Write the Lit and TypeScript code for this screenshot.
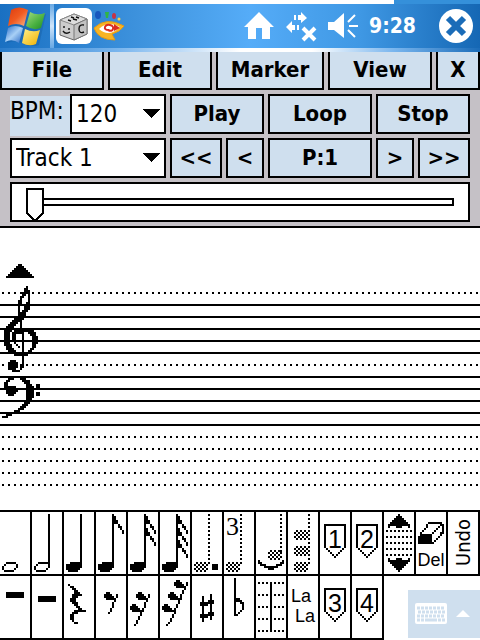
import { LitElement, html, css, svg } from "lit";
import { customElement, state } from "lit/decorators.js";

/* Bitmap art: rows are separated by spaces, spans in a row by commas, "_" is an empty row. */
function runs(top: number, rows: string): string {
  return rows
    .trim()
    .split(/\s+/)
    .map((row, i) =>
      row === "_"
        ? ""
        : row
            .split(",")
            .map((s) => {
              const [a, b = a] = s.split("-").map(Number);
              return `M${a} ${top + i}h${b - a + 1}v1h${a - b - 1}z`;
            })
            .join("")
    )
    .join("");
}

const range = (a: number, b: number, step: number) => {
  const out: number[] = [];
  for (let i = a; i <= b; i += step) out.push(i);
  return out;
};
const stem = (x: number, a = 1, b = 27) => `M${x} ${a}h1v${b - a + 1}h-1z`;
const dotStem = (x: number, a = 1, b = 25) => range(a, b, 2).map((y) => `M${x} ${y}h1v1h-1z`).join("");
const dotRow = (y: number, xs: number[]) => xs.map((x) => `M${x} ${y}h1v1h-1z`).join("");
const head = runs(25, "3-7 1-8 1-8 1-7 2-6");
const hollow = runs(25, "3-7 2,8 1,8 1,7 2-6");
const ghost = (x: number, y: number) =>
  runs(
    y,
    [0, 1, 2, 3, 4].map((r) => (r % 2 ? `${x},${x + 2},${x + 4},${x + 6}` : `${x + 1},${x + 3},${x + 5}`)).join(" ")
  );
const flag = (y: number) => runs(y, "8 8-9 8-9 8-10 9-10 11 11-12 12 13 13");
const restBlob = (x: number, y: number) => runs(y, `${x + 1}-${x + 2} ${x}-${x + 3} ${x}-${x + 4} ${x + 1}-${x + 5}`);
const shield = runs(6, "2-12 2,12 2,12 2,12 2,12 2,12 2,12 2,12 2,12 2,12 2,12 2,12 3,11 4,10 5,9 6,8 7");

interface Tool {
  name: string;
  art: string;
  text?: string;
  kind?: string;
}

const tools: Tool[] = [
  { name: "Whole note", art: hollow },
  { name: "Half note", art: hollow + stem(8) },
  { name: "Quarter note", art: head + stem(8) },
  { name: "Eighth note", art: head + stem(8) + flag(1) },
  { name: "Sixteenth note", art: head + stem(8) + flag(1) + flag(7) },
  { name: "Thirty-second note", art: head + stem(8) + flag(1) + flag(7) + flag(13) },
  { name: "Dotted", art: ghost(1, 25) + dotStem(8) + runs(26, "10-12 10-12 10-12") },
  { name: "Triplet", art: ghost(1, 25) + dotStem(8), text: "3", kind: "triplet" },
  { name: "Tie", art: ghost(6, 19) + dotStem(12, 1, 19) + runs(24, "1,13 1-2,12-13 2-4,10-12 4-10 6-8") },
  { name: "Chord", art: ghost(3, 9) + ghost(3, 17) + ghost(3, 25) + dotStem(10) },
  { name: "Marker 1", art: shield, text: "1", kind: "mark" },
  { name: "Marker 2", art: shield, text: "2", kind: "mark" },
  {
    name: "Transpose",
    art:
      runs(1, "7 6-8 5-9 4-10 3-11 2-4,5-9,10-12 2,6-8,12") +
      [9, 12, 15, 18, 21].map((y) => dotRow(y, range(1, 13, 2))).join("") +
      runs(23, "2,6-8,12 2-4,5-9,10-12 3-11 4-10 5-9 6-8 7"),
  },
  { name: "Delete", art: runs(5, "6-12 5,12-13 5,11,13 4,10,13 3,9,13 2,8,12-13 2-7,12 1-7,11 1-7,10 1-7,9 1-8"), text: "Del", kind: "del" },
  { name: "Undo", art: "", text: "Undo", kind: "undo" },
  { name: "Whole rest", art: runs(8, "3-11 3-11 3-11") },
  { name: "Half rest", art: runs(10, "3-11 3-11 3-11") },
  { name: "Quarter rest", art: runs(4, "2 3-4 4-5 5-6 5-7 4-8 4-6 3-5 3-5 4-6 5-6 6-7 7-8 5-10 4-6 3-4 3-4 3-4 4 5-6") },
  { name: "Eighth rest", art: restBlob(4, 8) + runs(9, "10 10 9 9 8 8 8 7 7 6") },
  { name: "Sixteenth rest", art: restBlob(4, 8) + restBlob(1, 14) + runs(9, "10 10 9 9 8 8 8 7 7 6 6 5 5 4 4 3") },
  {
    name: "Thirty-second rest",
    art: restBlob(7, 2) + restBlob(4, 8) + restBlob(1, 14) + runs(3, "13 13 12 12 11 11 10 10 10 9 9 8 8 7 7 7 6 6 5 5 4 3"),
  },
  { name: "Sharp", art: stem(5, 10, 22) + stem(9, 9, 21) + runs(12, "8-10 4-10 4-7 _ _ _ 8-10 4-10 4-7") },
  { name: "Flat", art: stem(5, 1, 19) + runs(11, "6-7 6-8 8-9 9 9 9 8 7 5-6") },
  { name: "Bar line", art: stem(7, 3, 27) + [3, 9, 15, 21, 27].map((y) => dotRow(y, [1, 3, 5, 9, 11, 13])).join("") },
  { name: "Lyrics", art: "", text: "La La", kind: "lyrics" },
  { name: "Marker 3", art: shield, text: "3", kind: "mark" },
  { name: "Marker 4", art: shield, text: "4", kind: "mark" },
];

const scrollUp = runs(0, "9-10 8-11 7-12 6-13 5-14 4-15 3-16");
const treble = runs(
  11,
  `13 12-13 12-14 11-12,14 11-12,14 10-11,14 10,14 9-10,14 9-10,13-14 9,13-14 9,12-14 9,12-14 9,11-13 9-12 9-12 8-11
  7-11 6-10 5-8,10 4-7,10 3-6,10 3-5,8-14 2-5,7-16 2-4,6-11,14-17 2-4,6-7,11,15-17 2-4,6-7,11,16-18 2-4,6-7,11,16-18
  2-4,6-7,11,16-18 2-4,7,11,16-18 2-5,8,11,16-17 3-5,9,11,16-17 3-6,11,15-16 4-7,11,14-15 5-14 7-13 11 11 5-7,11
  4-8,11 4-8,11 4-8,10-11 4-7,10 6-9`
);
const bass = runs(
  56,
  `6-10 4-6,10-12 3-4,11-14 2-3,12-14 2-3,13-15,18-19 2-7,13-16,18-19 2-8,13-16 3-8,13-16 3-7,13-16,18-19
  4-6,13-16,18-19 13-16 13-15 12-15 12-14 11-13 10-12 9-11 7-9 5-7 3-5 1-3`
);

const staffLines = "dsssssdsssssddddd".split("");

@customElement("app-root")
export class AppRoot extends LitElement {
  @state() private position = 0;

  static styles = css`
    :host {
      display: block;
      background: #fff;
      color: #000;
      font-family: "DejaVu Sans Condensed", "DejaVu Sans", sans-serif;
      --face: #cfdfee;
      --panel: #c5c1c6;
    }
    * {
      box-sizing: border-box;
    }
    button,
    select,
    input {
      font: inherit;
      color: inherit;
      margin: 0;
      padding: 0;
      border-radius: 0;
    }
    svg {
      display: block;
    }
    .edge {
      height: 4px;
      background: linear-gradient(90deg, #fff 82%, #3590da 82%);
    }
    .title {
      display: flex;
      align-items: center;
      height: 44px;
      padding: 0 6px 0 4px;
      color: #fff;
      background: linear-gradient(90deg, #1a70c2, #4196e0 32%, #55acf8 52%, #3f98e4 75%, #1567b4);
    }
    .title button {
      border: 0;
      background: none;
      flex: none;
    }
    .rule {
      width: 4px;
      height: 44px;
      margin: 0 2px;
      background: linear-gradient(#67a8e4, #cfe5fa, #67a8e4);
    }
    .spacer {
      flex: 1;
    }
    .status {
      display: flex;
      align-items: center;
      gap: 10px;
    }
    .clock {
      font-size: 21px;
      font-weight: bold;
      margin-right: 22px;
    }
    .shine {
      height: 4px;
      background: linear-gradient(90deg, #2a7ccb, #7ab6ee 25%, #fff 50%, #fff 65%, #7ab6ee 82%, #1b6cb9);
    }
    .menu {
      display: grid;
      grid-template-columns: 104fr 104fr 108fr 104fr 44fr;
      gap: 4px;
      background: var(--panel);
    }
    .btn {
      height: 40px;
      min-width: 0;
      border: 2px solid #000;
      background: var(--face);
      font-size: 22px;
      font-weight: bold;
      line-height: 36px;
      white-space: nowrap;
    }
    .menu .btn {
      height: 38px;
      border-top: 0;
    }
    .panel {
      display: grid;
      grid-template-columns: 156fr 52fr 38fr 104fr 38fr 52fr;
      gap: 4px;
      padding: 4px 10px;
      background: var(--panel);
      border-bottom: 2px solid #000;
    }
    .wide {
      grid-column: span 2;
    }
    .tempo {
      display: flex;
      height: 40px;
    }
    .tempo label {
      flex: 0 0 60px;
      height: 40px;
      margin-top: 2px;
      background: var(--face);
      font-size: 24px;
      line-height: 30px;
      white-space: nowrap;
    }
    .combo {
      flex: 1;
      min-width: 0;
      display: grid;
      align-items: center;
      justify-items: end;
    }
    .combo > * {
      grid-area: 1 / 1;
    }
    .combo svg {
      margin-right: 6px;
      pointer-events: none;
    }
    .combo select {
      appearance: none;
      width: 100%;
      height: 40px;
      padding: 0 4px;
      border: 2px solid #000;
      background: #fff;
      font-size: 24px;
    }
    .seek {
      grid-column: 1 / -1;
      height: 40px;
      padding: 0 14px;
      border: 2px solid #000;
      background: #fff;
    }
    .seek input {
      appearance: none;
      display: block;
      width: 100%;
      height: 36px;
      background: none;
    }
    .seek input::-webkit-slider-runnable-track {
      height: 8px;
      border: 2px solid #000;
      background: #fff;
    }
    .seek input::-webkit-slider-thumb {
      appearance: none;
      width: 18px;
      height: 34px;
      margin: -12px 0 0 -2px;
      background: url("data:image/svg+xml,%3Csvg xmlns='http://www.w3.org/2000/svg' width='18' height='34' shape-rendering='crispEdges'%3E%3Cpath d='M1 1H17V25L9 33L1 25Z' fill='white' stroke='black' stroke-width='2'/%3E%3C/svg%3E");
    }
    .score {
      position: relative;
      display: flex;
      flex-direction: column;
      gap: 10px;
      padding: 64px 0 24px;
    }
    .line {
      height: 2px;
      background: #000;
    }
    .line.d {
      background: repeating-linear-gradient(90deg, #fff 0 2px, #000 2px 4px, #fff 4px 6px);
    }
    .clefs {
      position: absolute;
      left: 0;
      top: 36px;
    }
    .tools {
      display: grid;
      grid-template-columns: repeat(15, 1fr);
      border-top: 2px solid #000;
    }
    .tool {
      display: grid;
      height: 64px;
      min-width: 0;
      border: solid #000;
      border-width: 0 2px 2px 0;
      background: #fff;
      overflow: hidden;
    }
    .tool > * {
      grid-area: 1 / 1;
    }
    .word {
      font-family: "Liberation Sans", sans-serif;
      white-space: nowrap;
    }
    .mark {
      font-size: 25px;
      line-height: 26px;
      padding-top: 14px;
    }
    .triplet {
      font-family: "Liberation Serif", serif;
      font-size: 26px;
      line-height: 30px;
      justify-self: start;
      padding-left: 2px;
    }
    .del {
      font-size: 18px;
      line-height: 24px;
      align-self: end;
      padding-bottom: 2px;
    }
    .undo {
      font-family: "DejaVu Sans Condensed", sans-serif;
      writing-mode: vertical-rl;
      transform: rotate(180deg);
      place-self: center;
      font-size: 20px;
      line-height: 30px;
    }
    .lyrics {
      display: flex;
      flex-direction: column;
      font-size: 18px;
      line-height: 20px;
      padding: 10px 3px;
      text-align: left;
    }
    .lyrics .second {
      text-align: right;
    }
    .sip {
      grid-column: span 3;
      justify-self: end;
      align-self: end;
      display: flex;
      align-items: center;
      gap: 9px;
      width: 72px;
      height: 48px;
      margin-bottom: 2px;
      padding: 0 7px;
      border: 0;
      background: var(--face);
    }
  `;

  private titleBar() {
    return html`
      <div class="edge"></div>
      <header class="title">
        <button aria-label="Start">
          <svg width="44" height="40" viewBox="0 0 44 40">
            <defs>
              <linearGradient id="r" x2="1" y2="1"><stop stop-color="#dc3c10" /><stop offset=".5" stop-color="#f05a20" /><stop offset="1" stop-color="#fab488" /></linearGradient>
              <linearGradient id="g" x2="1" y2="1"><stop stop-color="#a4dc80" /><stop offset=".6" stop-color="#48b040" /><stop offset="1" stop-color="#1f8a28" /></linearGradient>
              <linearGradient id="b" x2="1" y2="1"><stop stop-color="#2a6cc8" /><stop offset=".5" stop-color="#a8d0f6" /><stop offset="1" stop-color="#2767c4" /></linearGradient>
              <linearGradient id="y" x2="1" y2="1"><stop stop-color="#fff08c" /><stop offset="1" stop-color="#f0b000" /></linearGradient>
            </defs>
            <path fill="#0b4684" opacity=".25" d="M8 5Q16 1 24 6Q33 11 42 8L35 39Q27 42 20 38Q11 33 3 37Z" />
            <path fill="url(#r)" d="M7 4Q15-1 24 4L20 20Q12 16 4 20Z" />
            <path fill="url(#g)" d="M26 6Q33 10 41 7L37 22Q29 25 22 20Z" />
            <path fill="url(#b)" d="M4 22Q11 18 19 22L15 37Q8 32 1 36Z" />
            <path fill="url(#y)" d="M21 23Q29 27 36 24L32 38Q25 41 18 37Z" />
          </svg>
        </button>
        <div class="rule"></div>
        <button aria-label="Music">
          <svg width="36" height="36" viewBox="0 0 36 36">
            <rect width="36" height="36" rx="6" fill="#fff" />
            <path d="M4 12L18 6L31 11V26L18 32L4 27Z" fill="#ccc" stroke="#666" />
            <path d="M4 12L18 6L31 11L18 17Z" fill="#ddd" stroke="#888" />
            <path d="M18 17L31 11V26L18 32Z" fill="#c2c2c2" stroke="#777" />
            <path d="M15 9l3 1m2-1l3 1M12 12l3 1m2-2l4 1M8 18v2m5 0v2M7 23q3 4 7 1M28 17q-5-1-5 4t5 3" fill="none" stroke="#111" stroke-width="1.4" />
          </svg>
        </button>
        <button aria-label="Viewer">
          <svg width="34" height="32" viewBox="0 0 34 32">
            <path d="M2 18Q14 6 32 16Q28 22 20 24L23 30Q6 30 2 18Z" fill="#f8b424" stroke="#e09a18" />
            <path d="M7 19Q16 10 28 17Q17 28 7 19Z" fill="#fff" />
            <path d="M17 20q-5 0-4-3t5-2 3 4-5 1" fill="none" stroke="#db2c20" stroke-width="2" />
            <path d="M22 14l6 4-6 3z" fill="#db2c20" />
            <ellipse cx="6" cy="5" rx="3" ry="4" fill="#1757bd" />
            <path d="M13 2h4l-1 6h-2z" fill="#30b545" />
            <ellipse cx="22" cy="6" rx="2" ry="3" fill="#c53445" />
            <circle cx="27" cy="9" r="1.5" fill="#f6cf48" />
          </svg>
        </button>
        <div class="spacer"></div>
        <div class="status">
          <svg width="32" height="30" viewBox="0 0 32 30" fill="#fff" role="img" aria-label="Home">
            <path d="M16 1L31 16H27V28H19V17H13V28H5V16H1Z" />
          </svg>
          <svg width="32" height="32" viewBox="0 0 32 32" fill="#fff" role="img" aria-label="Not connected">
            <path d="M9 5h2v5H9zM13 5h3V2l6 6-6 5V10h-3zM1 17l6-6v4h3v5H7v3zM12 15h2v5h-2z" />
            <path d="M18 18L30 30M30 18L18 30" stroke="#fff" stroke-width="4" />
          </svg>
          <svg width="32" height="30" viewBox="0 0 32 30" fill="#fff" role="img" aria-label="Volume">
            <path d="M1 11H7L17 2V27L7 19H1Z" />
            <path d="M21 11L28 4M22 15H31M21 19L28 26" stroke="#fff" stroke-width="2" />
          </svg>
          <span class="clock">9:28</span>
        </div>
        <button aria-label="Close">
          <svg width="36" height="36" viewBox="0 0 36 36">
            <circle cx="18" cy="18" r="17" fill="#fff" />
            <path d="M10 10L26 26M26 10L10 26" stroke="#1b6cb8" stroke-width="6" />
          </svg>
        </button>
      </header>
      <div class="shine"></div>
    `;
  }

  private arrow() {
    return svg`<svg width="18" height="10" viewBox="0 0 18 10" shape-rendering="crispEdges"><path d="M0 0H18L9 9Z" /></svg>`;
  }

  private tool(t: Tool) {
    const word =
      t.kind === "lyrics"
        ? html`<span class="word lyrics"><span>La</span><span class="second">La</span></span>`
        : t.text
        ? html`<span class="word ${t.kind}">${t.text}</span>`
        : "";
    return html`<button class="tool" aria-label=${t.name}>
      <svg width="30" height="62" viewBox="0 0 15 31" shape-rendering="crispEdges"><path d=${t.art} /></svg>${word}
    </button>`;
  }

  render() {
    return html`
      ${this.titleBar()}
      <nav class="menu">
        ${["File", "Edit", "Marker", "View", "X"].map((m) => html`<button class="btn">${m}</button>`)}
      </nav>
      <section class="panel">
        <div class="tempo">
          <label for="bpm">BPM:</label>
          <div class="combo">
            <select id="bpm"><option>120</option></select>
            ${this.arrow()}
          </div>
        </div>
        <button class="btn wide">Play</button>
        <button class="btn">Loop</button>
        <button class="btn wide">Stop</button>
        <div class="combo">
          <select aria-label="Track"><option>Track 1</option></select>
          ${this.arrow()}
        </div>
        <button class="btn">&lt;&lt;</button>
        <button class="btn">&lt;</button>
        <button class="btn">P:1</button>
        <button class="btn">&gt;</button>
        <button class="btn">&gt;&gt;</button>
        <div class="seek">
          <input
            type="range"
            aria-label="Position"
            min="0"
            max="100"
            .value=${String(this.position)}
            @input=${(e: Event) => (this.position = Number((e.target as HTMLInputElement).value))}
          />
        </div>
      </section>
      <main class="score">
        ${staffLines.map((k) => html`<div class="line ${k}"></div>`)}
        <svg class="clefs" width="40" height="156" viewBox="0 0 20 78" shape-rendering="crispEdges">
          <path d=${scrollUp} />
          <path d=${treble} />
          <path d=${bass} />
        </svg>
      </main>
      <footer class="tools">
        ${tools.map((t) => this.tool(t))}
        <button class="sip" aria-label="Keyboard">
          <svg width="32" height="22" viewBox="0 0 32 22">
            <rect width="32" height="21" rx="2" fill="#fff" />
            <path d="M2 5H30M3 9H30M2 13H30" stroke="#cfdfee" stroke-width="3" stroke-dasharray="3 1" />
            <path d="M2 17H5M6 17H9M10 17H22M23 17H26M27 17H30" stroke="#cfdfee" stroke-width="3" />
          </svg>
          <svg width="14" height="8" viewBox="0 0 14 8"><path d="M0 7L7 0L14 7Z" fill="#fff" /></svg>
        </button>
      </footer>
    `;
  }
}
